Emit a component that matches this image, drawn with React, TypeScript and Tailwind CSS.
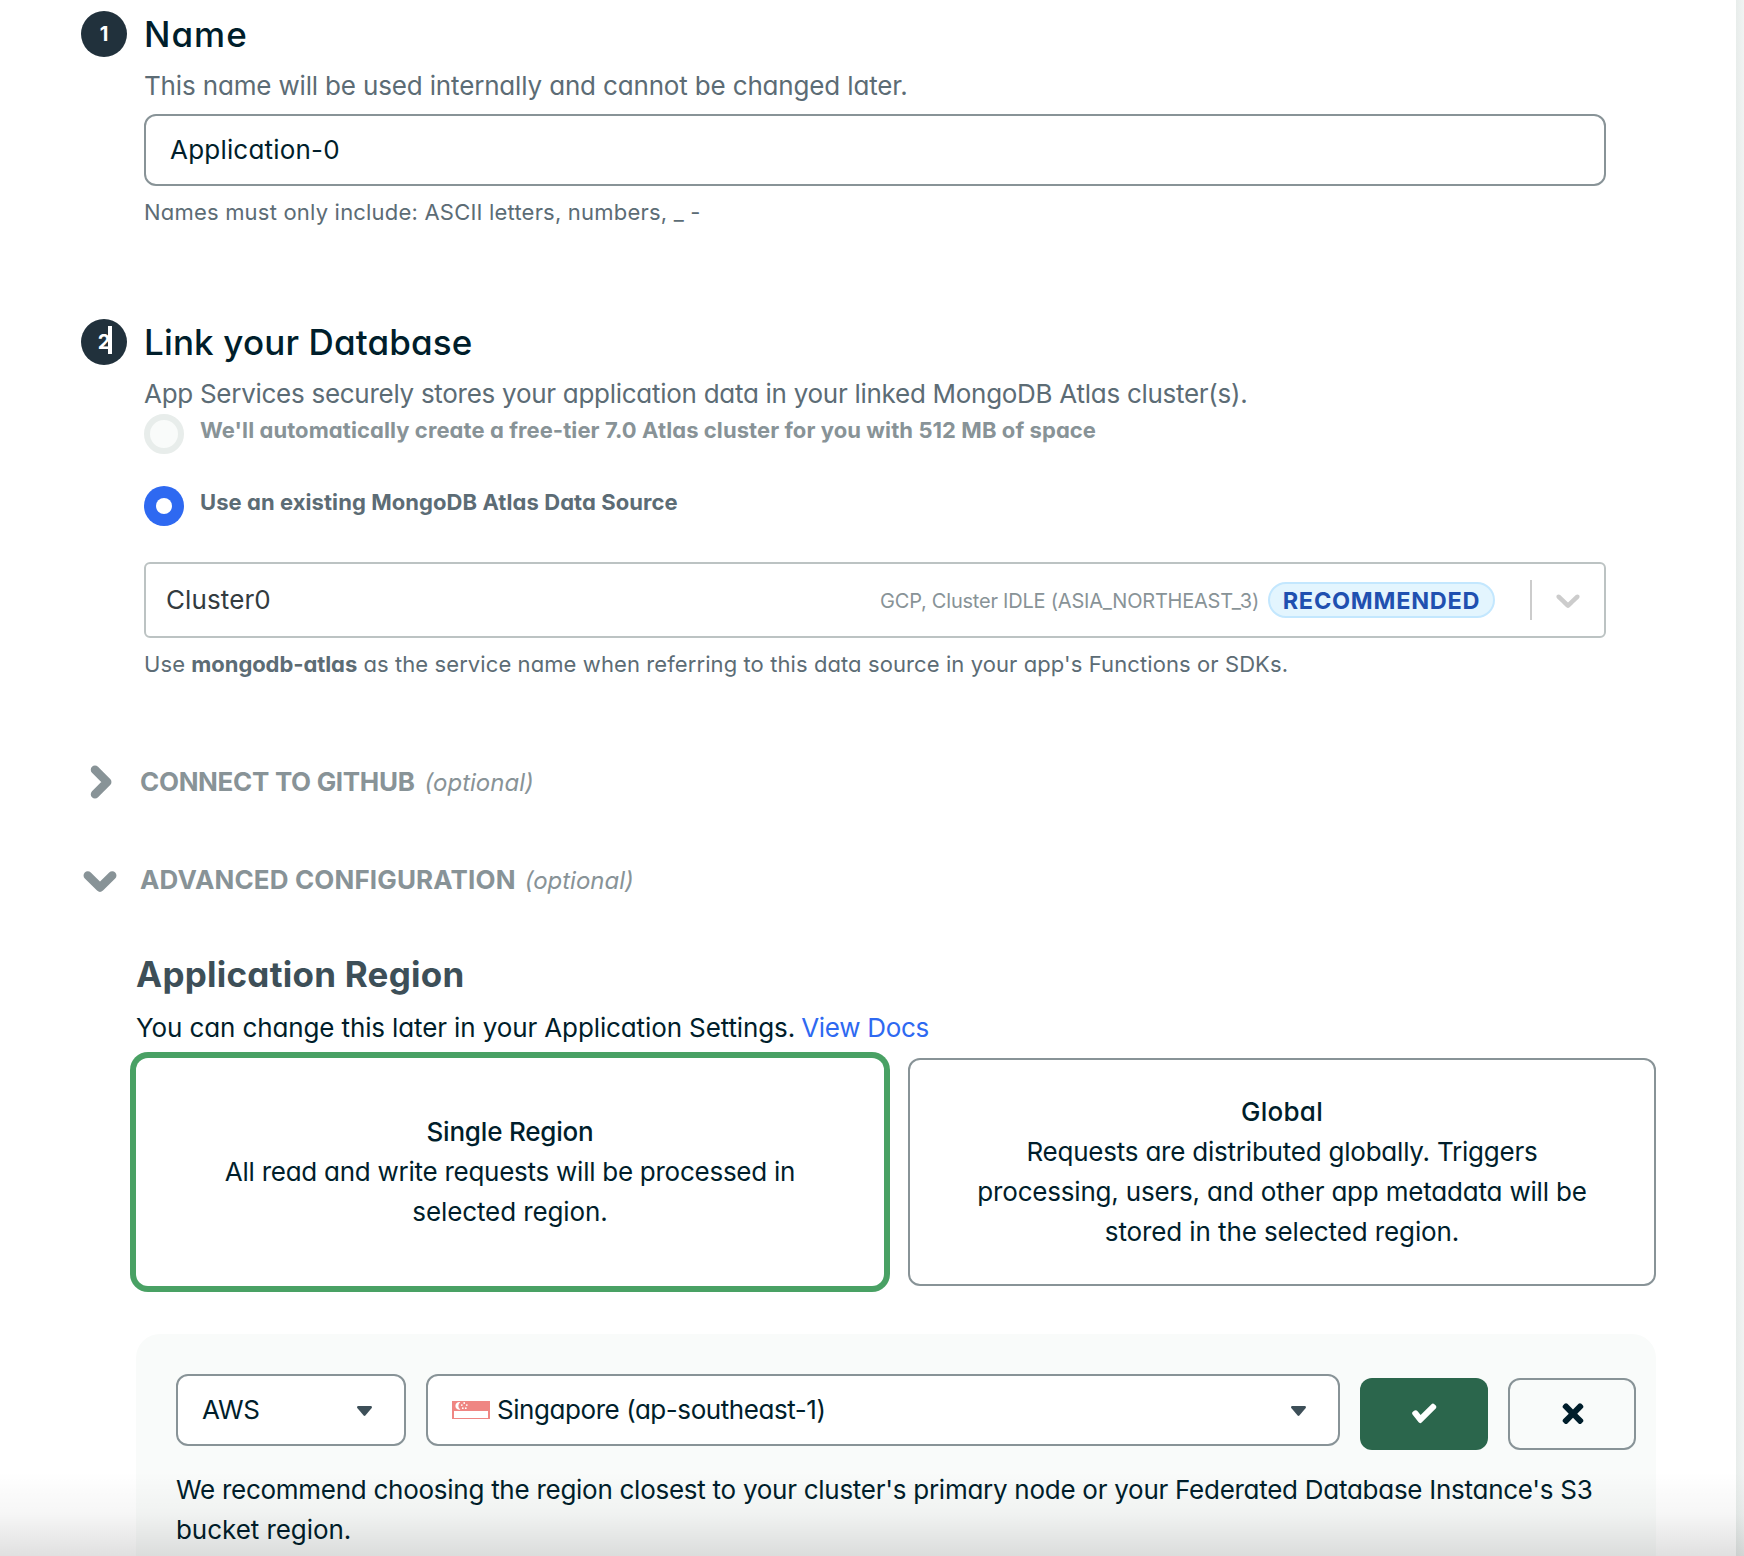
import type { ReactNode } from "react";

function StepBadge({ children }: { children: ReactNode }) {
  return (
    <div className="relative -mt-[3px] flex size-[46px] shrink-0 items-center justify-center rounded-full bg-[#21313c] text-[20px] leading-[46px] font-bold text-white">
      {children}
    </div>
  );
}

function CaretDown() {
  return (
    <svg viewBox="0 0 16 16" className="size-8 shrink-0 fill-[#3d4f58]">
      <path d="M8.67903 10.7962C8.45271 11.0679 8.04729 11.0679 7.82097 10.7962L4.63962 6.97649C4.3213 6.59428 4.5824 6 5.06866 6L11.4313 6C11.9176 6 12.1787 6.59428 11.8604 6.97649L8.67903 10.7962Z" />
    </svg>
  );
}

function CheckIcon() {
  return (
    <svg viewBox="0 0 16 16" className="mb-0.5 size-8 fill-white">
      <path d="M6.30583 9.05037L11.7611 3.59509C12.1516 3.20457 12.7848 3.20457 13.1753 3.59509L13.8824 4.3022C14.273 4.69273 14.273 5.32589 13.8824 5.71642L6.81525 12.7836C6.38819 13.2106 5.68292 13.1646 5.31505 12.6856L2.26638 8.71605C1.92998 8.27804 2.01235 7.65025 2.45036 7.31385L3.04518 6.85702C3.59269 6.43652 4.37742 6.53949 4.79792 7.087L6.30583 9.05037Z" />
    </svg>
  );
}

function CrossIcon() {
  return (
    <svg viewBox="0 0 16 16" className="mb-0.5 ml-px size-8 fill-[#001e2b]">
      <path d="M12.2028 3.40484C11.8123 3.01431 11.1791 3.01431 10.7886 3.40484L8.0001 6.19331L5.21163 3.40484C4.8211 3.01431 4.18794 3.01431 3.79741 3.40484L3.09031 4.11195C2.69978 4.50247 2.69978 5.13564 3.09031 5.52616L5.87878 8.31463L3.09031 11.1031C2.69978 11.4936 2.69978 12.1268 3.09031 12.5173L3.79741 13.2244C4.18794 13.615 4.8211 13.615 5.21163 13.2244L8.0001 10.436L10.7886 13.2244C11.1791 13.615 11.8123 13.615 12.2028 13.2244L12.9099 12.5173C13.3004 12.1268 13.3004 11.4936 12.9099 11.1031L10.1214 8.31463L12.9099 5.52616C13.3004 5.13564 13.3004 4.50247 12.9099 4.11195L12.2028 3.40484Z" />
    </svg>
  );
}

function SectionChevron({ open }: { open?: boolean }) {
  return (
    <svg viewBox="0 0 40 40" className="size-10 fill-none stroke-[#889397] stroke-[8.5]" strokeLinecap="round" strokeLinejoin="round">
      <path d={open ? "M7.8 15.5 L20 27.5 L32.2 15.5" : "M15 7.8 L27.2 20 L15 32.2"} />
    </svg>
  );
}

function SingaporeFlag() {
  return (
    <svg viewBox="0 0 38 18" className="h-[18px] w-[38px] shrink-0">
      <rect width="38" height="18" fill="#ef8683" />
      <rect x="2" y="10" width="34" height="7" fill="#fff" />
      <path d="M8.4 1.3 A3.8 3.8 0 1 0 8.4 8.5 A4.2 4.2 0 0 1 8.4 1.3Z" fill="#fff" />
      <g fill="#fff">
        <circle cx="12.2" cy="2" r="0.9" />
        <circle cx="9.8" cy="4.1" r="0.9" />
        <circle cx="14.8" cy="4.1" r="0.9" />
        <circle cx="10.8" cy="7.2" r="0.9" />
        <circle cx="13.8" cy="7.2" r="0.9" />
      </g>
    </svg>
  );
}

export default function App() {
  return (
    <div className="relative flex h-[1556px] w-[1744px] overflow-hidden bg-white font-['Inter',sans-serif] text-[26px] leading-10 text-[#001e2b] [font-feature-settings:'cv11']">
      <main className="flex w-[1736px] shrink-0 flex-col pt-3.5">
        {/* Step 1: application name */}
        <section className="flex gap-[17px] pl-[81px]">
          <StepBadge>1</StepBadge>
          <div className="w-[1462px]">
            <h2 className="text-[35px] font-medium tracking-[1px]">Name</h2>
            <p className="mt-3 tracking-[-0.16px] text-[#5c6c75]">This name will be used internally and cannot be changed later.</p>
            <div className="mt-2 flex h-[72px] items-center rounded-xl border-2 border-[#889397] px-6 tracking-[0.2px]">Application-0</div>
            <p className="mt-2 text-[22px] leading-9 tracking-[0.2px] text-[#5c6c75]">Names must only include: ASCII letters, numbers, _ -</p>
          </div>
        </section>

        {/* Step 2: linked database */}
        <section className="mt-[92px] flex gap-[17px] pl-[81px]">
          <StepBadge>
            2
            <span className="absolute top-[7px] left-[27px] h-7 w-1 bg-white" />
          </StepBadge>
          <div className="w-[1462px]">
            <h2 className="text-[35px] font-medium tracking-[0.15px]">Link your Database</h2>
            <p className="mt-3 tracking-[-0.28px] whitespace-nowrap text-[#5c6c75]">
              App Services securely stores your application data in your linked MongoDB Atlas cluster(s).
            </p>
            <div className="flex h-10 gap-4 text-[22px] leading-8 font-bold text-[#889397]">
              <span className="size-10 shrink-0 rounded-full border-6 border-[#e8edeb] bg-[#f9fbfa]" />
              <span className="tracking-[0.08px]">We'll automatically create a free-tier 7.0 Atlas cluster for you with 512 MB of space</span>
            </div>
            <div className="mt-8 flex h-10 gap-4 text-[22px] leading-8 font-bold text-[#5c6c75]">
              <span className="flex size-10 shrink-0 items-center justify-center rounded-full bg-[#2e69f1]">
                <span className="size-4 rounded-full bg-white" />
              </span>
              <span className="tracking-[0.07px]">Use an existing MongoDB Atlas Data Source</span>
            </div>
            <div className="mt-9 flex h-[76px] items-center rounded-md border-2 border-[#bcc3c3] pr-4 pl-5">
              <span className="tracking-[0.1px] text-[#333b40]">Cluster0</span>
              <span className="ml-auto pt-0.5 text-[20px] tracking-[-0.22px] text-[#889397]">GCP, Cluster IDLE (ASIA_NORTHEAST_3)</span>
              <span className="ml-[9px] flex h-9 w-[227px] items-center justify-center rounded-full border-2 border-[#c3e7fe] bg-[#e3f5fe] pt-0.5 text-[23.5px] font-bold tracking-[0.75px] text-[#1f50b0]">
                RECOMMENDED
              </span>
              <span className="ml-[35px] h-10 w-0.5 bg-[#cccccc]" />
              <svg viewBox="0 0 20 20" className="ml-4 size-10 fill-[#cccccc]">
                <path d="M4.516 7.548c0.436-0.446 1.043-0.481 1.576 0l3.908 3.747 3.908-3.747c0.533-0.481 1.141-0.446 1.574 0 0.436 0.445 0.408 1.197 0 1.615-0.406 0.418-4.695 4.502-4.695 4.502-0.217 0.223-0.502 0.335-0.787 0.335s-0.57-0.112-0.789-0.335c0 0-4.287-4.084-4.695-4.502s-0.436-1.17 0-1.615z" />
              </svg>
            </div>
            <p className="mt-2 text-[22px] leading-9 tracking-[0.09px] text-[#5c6c75]">
              Use <b className="font-bold tracking-[-0.08px]">mongodb-atlas</b> as the service name when referring to this data source in your app's Functions or SDKs.
            </p>
          </div>
        </section>

        {/* Collapsible sections */}
        <div className="mt-20 flex h-10 items-center gap-5 pl-20 text-[#889397]">
          <SectionChevron />
          <div className="flex items-baseline gap-2.5">
            <span className="font-bold tracking-[-0.32px]">CONNECT TO GITHUB</span>
            <i className="text-[24px]">(optional)</i>
          </div>
        </div>
        <div className="mt-[58px] flex h-10 items-center gap-5 pl-20 text-[#889397]">
          <SectionChevron open />
          <div className="flex items-baseline gap-[9px]">
            <span className="font-bold tracking-[0.14px]">ADVANCED CONFIGURATION</span>
            <i className="text-[24px]">(optional)</i>
          </div>
        </div>

        {/* Region settings */}
        <section className="mt-[54px] ml-[136px] w-[1520px]">
          <h2 className="text-[35px] font-bold tracking-[0.25px] text-[#3d4f58]">Application Region</h2>
          <p className="mt-3.5 tracking-[-0.12px]">
            You can change this later in your Application Settings. <a className="-ml-px tracking-[-0.3px] text-[#2e69f1]">View Docs</a>
          </p>
          <div className="mt-2.5 grid grid-cols-2 gap-6 text-center">
            <div className="flex h-[228px] flex-col justify-center rounded-xl ring-6 ring-[#49a164]">
              <p className="font-medium tracking-[-0.2px]">Single Region</p>
              <p className="tracking-[-0.26px]">
                All read and write requests will be processed in
                <br />
                <span className="tracking-[-0.1px]">selected region.</span>
              </p>
            </div>
            <div className="flex h-[228px] flex-col justify-center rounded-xl border-2 border-[#889397]">
              <p className="font-medium tracking-[0.3px]">Global</p>
              <p className="tracking-[-0.22px]">
                Requests are distributed globally. Triggers
                <br />
                <span className="tracking-[-0.19px]">processing, users, and other app metadata will be</span>
                <br />
                <span className="tracking-[-0.11px]">stored in the selected region.</span>
              </p>
            </div>
          </div>

          <div className="mt-12 h-[300px] rounded-3xl bg-[#f9fbfa] pt-10 pl-10">
            <div className="flex gap-5">
              <div className="flex h-[72px] w-[230px] items-center justify-between rounded-xl border-2 border-[#889397] bg-white px-6">
                <span className="tracking-[-0.4px]">AWS</span>
                <CaretDown />
              </div>
              <div className="flex h-[72px] w-[914px] items-center rounded-xl border-2 border-[#889397] bg-white px-6">
                <SingaporeFlag />
                <span className="ml-[7px] tracking-[-0.44px]">Singapore (ap-southeast-1)</span>
                <span className="ml-auto">
                  <CaretDown />
                </span>
              </div>
              <button className="mt-1 flex h-[72px] w-32 items-center justify-center rounded-xl bg-[#2b664c]">
                <CheckIcon />
              </button>
              <button className="mt-1 flex h-[72px] w-32 items-center justify-center rounded-xl border-2 border-[#889397] bg-[#f9fbfa]">
                <CrossIcon />
              </button>
            </div>
            <p className="mt-5 tracking-[-0.27px] whitespace-nowrap">
              We recommend choosing the region closest to your cluster's primary node or your Federated Database Instance's S3
              <br />
              <span className="tracking-[-0.05px]">bucket region.</span>
            </p>
          </div>
        </section>
      </main>
      <div className="w-2 shrink-0 bg-linear-to-r from-[#e8edeb] to-[#f0f3f2]" />
      <div className="pointer-events-none absolute inset-x-0 bottom-0 h-[84px] bg-[linear-gradient(to_bottom,rgba(0,0,0,0),rgba(0,0,0,0.035)_50%,rgba(0,0,0,0.12))]" />
    </div>
  );
}
